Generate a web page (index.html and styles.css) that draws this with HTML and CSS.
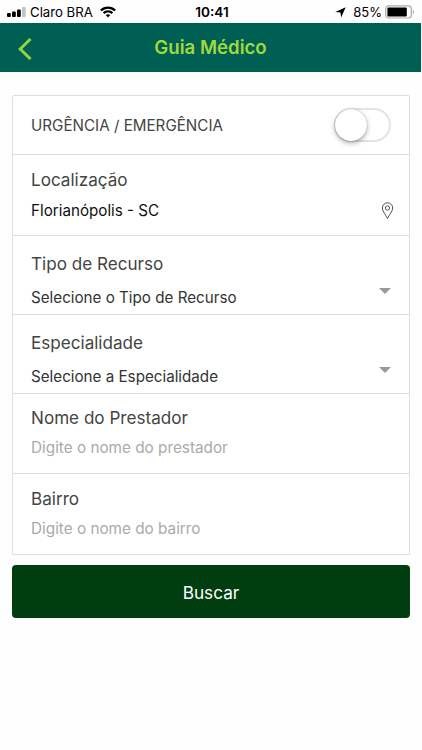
FILE: index.html
```html
<!DOCTYPE html>
<html lang="pt-BR">
<head>
  <meta charset="UTF-8">
  <meta name="viewport" content="width=device-width, initial-scale=1">
  <title>Guia Médico</title>
  <link rel="stylesheet" href="styles.css">
</head>
<body>
  <div class="status-bar">
    <div class="status-left">
      <svg class="signal" width="19" height="10" viewBox="0 0 19 10">
        <rect x="0" y="6" width="3.8" height="4" rx="1"/>
        <rect x="5" y="4.5" width="3.8" height="5.5" rx="1"/>
        <rect x="10" y="2.5" width="3.8" height="7.5" rx="1"/>
        <rect x="15" y="0" width="3.8" height="10" rx="1" fill="#c4c4c4"/>
      </svg>
      <span class="operadora">Claro BRA</span>
      <svg class="wifi" width="16" height="12" viewBox="0 0 16 12" fill="none" stroke="#000" stroke-width="2.3">
        <path d="M.9 4.5C4.9.6 11.1.6 15.1 4.5"/>
        <path d="M3.6 7.2c2.5-2.4 6.3-2.4 8.8 0"/>
        <path d="M5.7 9L8 11.5 10.3 9C9 7.9 7 7.9 5.7 9z" fill="#000" stroke="none"/>
      </svg>
    </div>
    <span class="hora">10:41</span>
    <div class="status-right">
      <svg class="gps" width="11" height="11" viewBox="0 0 11 11"><path d="M10.7.3L6.1 10.6 5.5 5.6.3 5z"/></svg>
      <span class="carga">85%</span>
      <svg class="bateria" width="30" height="14" viewBox="0 0 30 14">
        <rect x=".7" y=".8" width="25.6" height="12.2" rx="3" fill="#fff" stroke="#aaa" stroke-width="1.2"/>
        <rect x="2.4" y="2.4" width="19.4" height="9" rx="1"/>
        <path d="M27.8 5v4c1.5-.5 1.5-3.5 0-4z" fill="#999"/>
      </svg>
    </div>
  </div>

  <header class="topo">
    <svg class="voltar" width="14" height="22" viewBox="0 0 14 22" fill="none" stroke="#8fd53f" stroke-width="3">
      <path d="M12.5 1L2.2 11l10.3 10"/>
    </svg>
    <h1>Guia Médico</h1>
  </header>

  <main>
    <form class="filtros">
      <div class="campo campo-urgencia">
        <span class="urgencia">URGÊNCIA / EMERGÊNCIA</span>
        <span class="switch"><span class="bola"></span></span>
      </div>
      <div class="campo campo-local">
        <div>
          <div class="titulo">Localização</div>
          <div class="valor valor-local">Florianópolis - SC</div>
        </div>
        <svg class="pino" width="13" height="18" viewBox="0 0 13 18" fill="none" stroke="#555" stroke-width="1">
          <path d="M6.5 16.6C5 13 1.3 9.2 1.3 6a5.2 5.2 0 0 1 10.4 0c0 3.2-3.7 7-5.2 10.6z"/>
          <circle cx="6.5" cy="6" r="2.1"/>
        </svg>
      </div>
      <div class="campo campo-select">
        <div>
          <div class="titulo">Tipo de Recurso</div>
          <div class="valor">Selecione o Tipo de Recurso</div>
        </div>
        <span class="seta"></span>
      </div>
      <div class="campo campo-select">
        <div>
          <div class="titulo">Especialidade</div>
          <div class="valor">Selecione a Especialidade</div>
        </div>
        <span class="seta"></span>
      </div>
      <div class="campo campo-texto">
        <div>
          <div class="titulo">Nome do Prestador</div>
          <div class="valor dica">Digite o nome do prestador</div>
        </div>
      </div>
      <div class="campo campo-texto campo-bairro">
        <div>
          <div class="titulo">Bairro</div>
          <div class="valor dica">Digite o nome do bairro</div>
        </div>
      </div>
    </form>
    <button class="buscar" type="button">Buscar</button>
  </main>
</body>
</html>
```
FILE: styles.css
```css
* {
  box-sizing: border-box;
}
body {
  font-family: 'Inter', sans-serif;
  background: #fefefe;
  margin: 0;
  color: #444;
}
svg {
  display: block;
}

/* barra de status */
.status-bar {
  display: grid;
  grid-template-columns: 1fr auto 1fr;
  align-items: center;
  height: 23px;
  padding: 1px 7px 0;
  font-size: 13px;
  color: #000;
}
.status-left, .status-right {
  display: flex;
  align-items: center;
}
.status-right {
  justify-content: flex-end;
}
.operadora {
  margin: 0 7px 0 4px;
  font-size: 13.2px;
}
.hora {
  font-weight: 600;
  font-size: 13.6px;
  margin-left: 2px;
}
.gps {
  margin-right: 7px;
}
.carga {
  margin-right: 3px;
}

/* topo */
.topo {
  display: grid;
  grid-template-columns: 32px 1fr 32px;
  align-items: center;
  height: 49px;
  margin-right: 1px;
  padding: 0 0 0 18px;
  background: #005f53;
}
.topo h1 {
  margin: 0 18px 1px 0;
  text-align: center;
  font-size: 18.6px;
  line-height: 24px;
  font-weight: 600;
  color: #a0d93c;
}
.voltar {
  margin-top: 3px;
}

/* formulario */
main {
  padding: 23px 12px 0;
}
.filtros {
  border: 1px solid #dedede;
  border-radius: 2px 2px 0 0;
  background: #fff;
}
.campo {
  display: flex;
  justify-content: space-between;
  height: 79px;
  padding: 17px 18px 0;
  border-bottom: 1px solid #dedede;
}
.campo:last-child {
  border-bottom: 0;
}
.campo-urgencia {
  height: 59px;
  padding-top: 0;
  align-items: center;
}
.urgencia {
  font-size: 15.2px;
}
.titulo {
  font-size: 17.1px;
  line-height: 22px;
}
.valor {
  font-size: 15.2px;
  line-height: 20px;
  color: #333;
}
.campo-local {
  height: 81px;
  padding-top: 14px;
}
.valor-local {
  margin-top: 10px;
  color: #111;
}
.pino {
  margin: 33px -3px 0 0;
}
.campo-select .valor {
  margin-top: 13px;
}
.seta {
  width: 0;
  height: 0;
  margin-top: 35px;
  border-left: 6px solid transparent;
  border-right: 6px solid transparent;
  border-top: 6px solid #999;
}
.campo-texto {
  height: 80px;
  padding-top: 13px;
}
.campo-bairro {
  padding-top: 14px;
}
.campo-texto .valor {
  margin-top: 9px;
}
.valor.dica {
  font-size: 15.3px;
  color: #aaa;
}

/* chave liga/desliga */
.switch {
  display: flex;
  align-items: center;
  width: 57px;
  height: 34px;
  border: 2px solid #e4e4e4;
  border-radius: 17px;
}
.bola {
  width: 32px;
  height: 32px;
  margin-left: -1px;
  border-radius: 50%;
  background: #fff;
  box-shadow: 0 0 1px rgba(0,0,0,0.35), 0 2px 5px rgba(0,0,0,0.35);
}

.buscar {
  display: block;
  width: 100%;
  height: 53px;
  margin-top: 10px;
  padding: 1px 0 0;
  border: 0;
  border-radius: 4px;
  background: #003e10;
  color: #fff;
  font-family: inherit;
  font-size: 17.2px;
}
```
